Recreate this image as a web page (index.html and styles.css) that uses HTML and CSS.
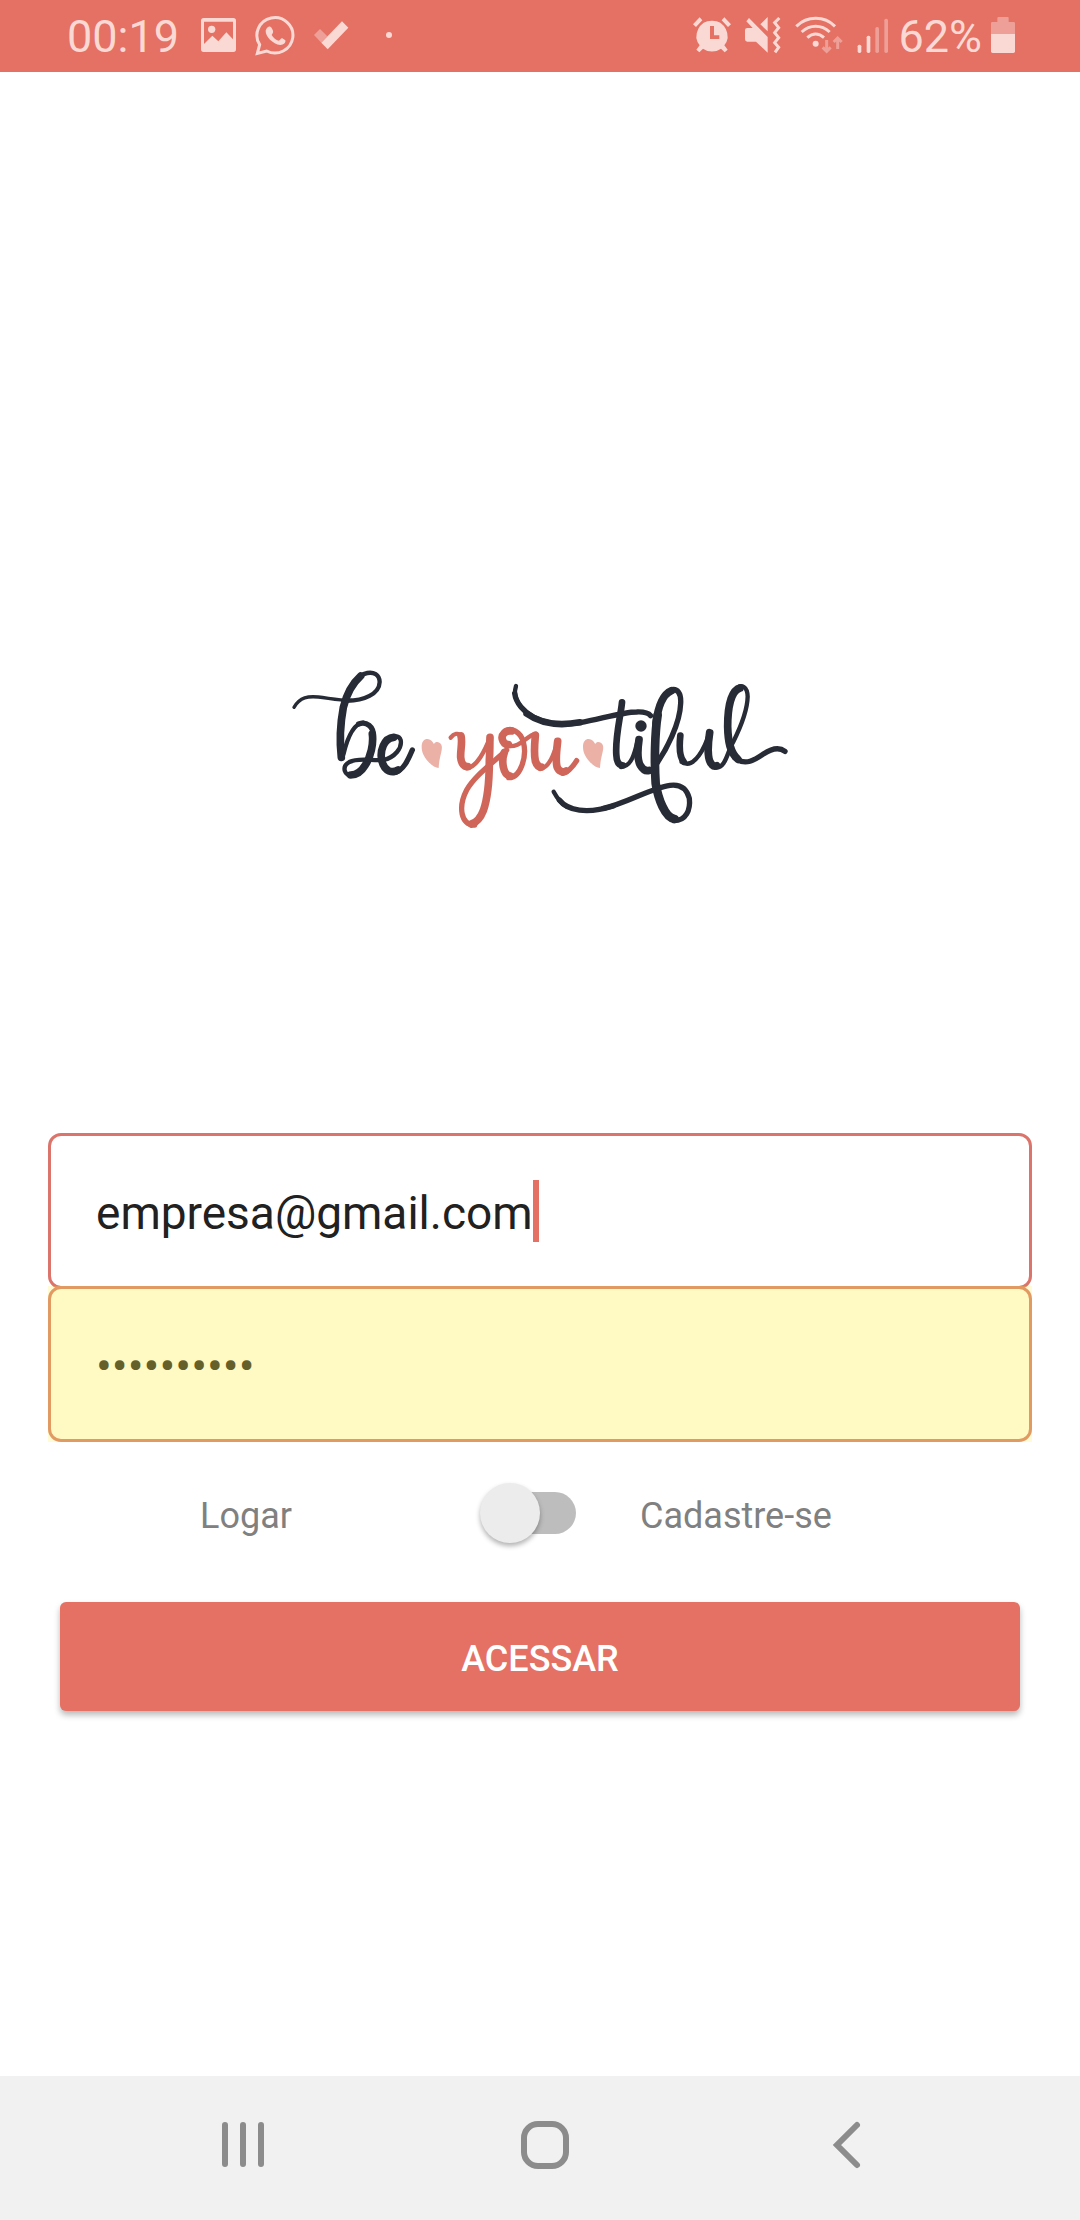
FILE: index.html
```html
<!DOCTYPE html>
<html lang="pt-BR">
<head>
<meta charset="utf-8">
<meta name="viewport" content="width=device-width, initial-scale=1">
<title>Be-you-tiful</title>
<link rel="stylesheet" href="styles.css">
</head>
<body>
<header class="status">
  <div class="status-group">
    <span class="status-text time">00:19</span>
    <svg width="38" height="40" viewBox="480 48 114 120" aria-hidden="true"><path fill-rule="evenodd" d="M491 54H580Q588 54 588 62V148Q588 156 580 156H491Q483 156 483 148V62Q483 54 491 54ZM492 65V132L517 107L535 124L559 97L579 118V65Z"/><circle cx="515" cy="88" r="11"/></svg>
    <svg width="41" height="40" viewBox="645 48 123 120" aria-hidden="true"><path class="wa-ring" d="M652 160L659 134A54 53 0 1 1 680 153Z"/><path d="M685 81C690 77 695 82 699 92C701 98 696 101 695 105C700 114 708 120 716 122C720 122 722 114 727 115L736 121C738 128 731 135 721 135C698 132 676 109 677 92C678 87 681 83 685 81Z"/></svg>
    <svg width="36" height="40" viewBox="822 48 108 120" aria-hidden="true"><path class="dim" d="M825 105L843 87L865 109L847 128Z"/><path d="M847 128L909 64L928 83L866 148Z"/></svg>
    <svg width="27" height="40" viewBox="978 48 81 120" aria-hidden="true"><circle cx="1047" cy="105" r="9"/></svg>
  </div>
  <div class="status-group status-right">
    <svg width="40" height="40" viewBox="63 48 120 120" aria-hidden="true"><path fill-rule="evenodd" d="M123 62A46 46 0 0 1 160 136L170 149L161 157L150 146A46 46 0 0 1 96 146L85 157L76 149L86 136A46 46 0 0 1 123 62ZM117 78V117H145V106H129V78Z"/><path d="M66 73L86 52L94 61L75 81ZM160 52L180 73L171 81L152 61Z"/></svg>
    <svg width="38" height="40" viewBox="219 48 114 120" aria-hidden="true"><path d="M234 54L290 111V158L255 125H229Q222 125 222 118V90Q222 84 229 84H245L226 64ZM290 51V94L268 73Z"/><path class="line" d="M325 54L311 68L323 83L311 98L323 113L311 128L323 142L312 157"/></svg>
    <svg width="50" height="40" viewBox="366 48 150 120" aria-hidden="true"><path class="line" d="M373 79C406 47 457 47 489 79M389 96C414 73 448 73 473 96M406 113C422 99 440 99 456 113"/><circle cx="431" cy="131" r="9"/><path class="line dim-line" d="M464 120V154M452 142L464 154L476 142M497 147V114M485 126L497 114L509 126"/></svg>
    <svg width="34" height="40" viewBox="537 48 102 120" aria-hidden="true"><rect x="542" y="134" width="11" height="25" rx="5"/><rect x="569" y="107" width="11" height="52" rx="5"/><rect class="dim" x="595" y="81" width="11" height="78" rx="5"/><rect class="dim" x="622" y="56" width="11" height="103" rx="5"/></svg>
    <span class="status-text charge">62%</span>
    <svg width="26" height="40" viewBox="954 48 78 120" aria-hidden="true"><path class="dim" d="M957 102V70Q957 66 961 66H976V54Q976 51 979 51H1007Q1010 51 1010 54V66H1025Q1029 66 1029 70V102Z"/><path d="M957 102H1029V154Q1029 159 1024 159H962Q957 159 957 154Z"/></svg>
  </div>
</header>

<main class="login">
  <svg class="logo" viewBox="0 0 1560 540" role="img" aria-label="be you tiful">
    <g class="ink">
      <path class="hair" d="M42 142C60 111 85 108 115 111C150 115 180 122 215 121"/>
      <path class="thin" d="M190 122C255 125 298 100 299 66C298 42 280 36 262 39C230 45 207 82 196 125"/>
      <path class="bold" d="M242 48C214 73 199 105 190 142C181 190 178 240 184 292"/>
      <path class="thin" d="M190 284C205 222 225 190 250 188"/>
      <path class="mid" d="M236 192C260 183 281 200 280 228"/>
      <path class="bold" d="M277 222C281 252 272 290 256 315C244 335 230 345 212 345"/>
      <path class="thin" d="M220 347C192 350 184 320 208 306C235 292 275 303 310 300C345 292 367 264 362 240C358 226 336 224 322 238"/>
      <path class="bold" d="M341 232C312 234 298 274 306 304C314 336 338 340 354 330"/>
      <path class="mid" d="M342 338C370 334 386 296 397 270"/>
    </g>
    <path id="heart" class="heart" d="M425 260C425 240 438 233 450 239C457 243 460 249 462 252C466 244 478 244 484 254C490 270 478 286 476 324C468 324 455 317 445 305C430 288 425 275 425 260Z"/>
    <use href="#heart" x="484"/>
    <g class="coral">
      <path class="thin" d="M512 233C522 220 535 219 543 225"/>
      <path class="bold" d="M543 228C548 244 541 270 542 292C544 312 553 320 563 320"/>
      <path class="thin" d="M560 325C590 322 616 270 630 232"/>
      <path class="bold" d="M630 232C629 260 630 275 628 300C628 350 625 410 610 452C600 478 588 488 574 492"/>
      <path class="mid" d="M584 495C542 496 534 440 560 390C582 350 630 315 680 270"/>
      <path class="bold" d="M673 277C664 302 668 344 690 348"/>
      <path class="mid" d="M686 353C721 354 742 290 730 246C722 214 692 202 678 212"/>
      <path class="bold" d="M694 213C676 211 663 224 667 238C669 248 676 254 685 254"/>
      <path class="thin" d="M678 257C725 265 735 228 768 221"/>
      <path class="bold" d="M766 226C764 250 761 280 766 303C770 316 776 321 784 321"/>
      <path class="thin" d="M780 327C809 323 822 280 833 245"/>
      <path class="bold" d="M833 244C830 270 826 300 831 320C836 334 848 339 858 333"/>
      <path class="mid" d="M848 340C868 336 880 318 890 302"/>
    </g>
    <g class="ink" transform="translate(660 0)">
      <path class="thin" d="M48 78C36 114 62 150 100 173"/>
      <path class="mid" d="M44 100C48 130 72 156 100 171C140 192 190 196 240 188C300 178 365 156 410 156C434 155 446 160 452 167"/>
      <path class="wide" d="M80 161C130 197 190 196 240 187"/>
      <path class="wide" d="M366 127C362 170 345 230 349 285C350 308 358 316 368 316"/>
      <path class="thin" d="M363 321C396 319 405 275 412 245"/>
      <path class="bold" d="M417 239C414 260 409 295 421 316C430 331 440 334 448 331"/>
      <circle class="dot" cx="423" cy="198" r="17"/>
      <path class="mid" d="M465 318C500 270 540 190 542 130C544 98 531 86 516 89"/>
      <path class="bold" d="M514 92C488 103 474 140 468 190"/>
      <path class="heavy" d="M473 165C464 220 463 310 467 370C474 415 495 474 524 477"/>
      <path class="mid" d="M522 482C558 482 572 450 568 415C560 385 540 372 510 376C450 385 380 430 310 445"/>
      <path class="mid" d="M340 438C260 463 203 452 178 420"/>
      <path class="thin" d="M200 440C180 428 170 412 161 395"/>
      <path class="wide" d="M541 227C538 255 538 290 551 305"/>
      <path class="thin" d="M545 306C584 330 616 260 628 218"/>
      <path class="bold" d="M629 218C624 250 620 300 636 314C641 319 646 319 650 317"/>
      <path class="thin" d="M648 323C678 322 680 280 700 245C720 205 742 155 743 110C742 78 724 74 712 83"/>
      <path class="bold" d="M720 84C692 92 683 145 683 200C684 245 690 278 714 298"/>
      <path class="mid" d="M704 293C736 320 767 298 790 282C820 262 842 264 855 274"/>
    </g>
  </svg>

  <form class="form">
    <div class="field">
      <input class="input email" type="text" inputmode="email" aria-label="E-mail" value="empresa@gmail.com"><span class="caret"></span>
    </div>
    <div class="autofill">
      <div class="field filled">
        <input class="input password" type="password" aria-label="Senha" value="senha12345">
      </div>
    </div>
    <div class="mode">
      <label class="mode-label" for="mode">Logar</label>
      <input class="switch" id="mode" type="checkbox" role="switch">
      <label class="mode-label" for="mode">Cadastre-se</label>
    </div>
    <button class="submit" type="button">ACESSAR</button>
  </form>
</main>

<nav class="nav">
  <button class="nav-button" type="button" aria-label="Recentes"><svg width="48" height="54" viewBox="0 0 48 54"><path d="M6 7V46M24 7V46M42 7V46"/></svg></button>
  <button class="nav-button" type="button" aria-label="Início"><svg width="48" height="54" viewBox="0 0 48 54"><rect x="3" y="6" width="42" height="42" rx="14"/></svg></button>
  <button class="nav-button" type="button" aria-label="Voltar"><svg width="48" height="54" viewBox="0 0 48 54"><path d="M34 7L14 27L34 47"/></svg></button>
</nav>
</body>
</html>
```
FILE: styles.css
```css
* {
  box-sizing: border-box;
}

body {
  margin: 0;
  min-height: 100vh;
  display: flex;
  flex-direction: column;
  background: #fff;
  font-family: Roboto, "Noto Sans", sans-serif;
}

button,
input {
  font-family: inherit;
}

/* Status bar */
.status {
  display: flex;
  justify-content: space-between;
  align-items: center;
  height: 72px;
  padding: 0 64px 0 67px;
  background: #e57164;
  color: #fad9d5;
}

.status-group {
  display: flex;
  align-items: center;
  gap: 17px;
}

.status-right {
  gap: 12px;
}

.status-text {
  padding-top: 2px;
  font-size: 45px;
  line-height: 70px;
}

.time {
  margin-right: 4px;
}

.charge {
  margin: 0 -4px;
}

.status svg {
  flex: none;
  fill: #fad9d5;
}

.status .dim {
  fill: #ee9f97;
}

.status .line,
.status .wa-ring {
  fill: none;
  stroke: #fad9d5;
  stroke-width: 9;
}

.status .dim-line {
  stroke: #ee9f97;
}

/* Logo */
.login {
  flex: 1;
  padding: 588px 48px 0;
}

.logo {
  display: block;
  width: 520px;
  max-width: 100%;
  margin: 0 auto 293px;
}

.logo path {
  fill: none;
  stroke-linecap: round;
  stroke-linejoin: round;
}

.ink {
  stroke: #272b35;
}

.coral {
  stroke: #cf6659;
}

.logo .heart {
  fill: #ebb1a7;
}

.dot {
  fill: #272b35;
  stroke: none;
}

/* Pen widths of the lettering */
.hair { stroke-width: 10px; }
.thin { stroke-width: 13px; }
.mid { stroke-width: 16px; }
.wide { stroke-width: 20px; }
.bold { stroke-width: 23px; }
.heavy { stroke-width: 26px; }

/* Form */
.form {
  display: flex;
  flex-direction: column;
}

.field {
  display: flex;
  align-items: center;
  height: 156px;
  padding: 0 45px;
  border: 3px solid #db746b;
  border-radius: 13px;
}

/* Browser autofill tint, laid over the field above by one border */
.autofill {
  margin-top: -3px;
  background: rgba(255, 235, 59, 0.22);
}

.filled {
  border-color: #e19a62;
  background: #fff9c4;
}

.input {
  height: 62px;
  padding: 3px 0 0;
  border: 0;
  outline: 0;
  background: none;
  color: #212121;
  font-size: 46px;
}

.email {
  field-sizing: content;
}

.password {
  flex: 1;
  color: #65602a;
  font-size: 47px;
}

.caret {
  width: 6px;
  height: 62px;
  background: #e57164;
}

.mode {
  display: grid;
  grid-template-columns: 7fr 4fr 11fr;
  align-items: center;
  height: 142px;
  margin: 0 -48px 0 152px;
}

.mode-label {
  padding-top: 6px;
  color: #808080;
  font-size: 36px;
}

/* Toggle: the track is the input, the thumb is its pseudo-element */
.switch {
  appearance: none;
  position: relative;
  width: 96px;
  height: 42px;
  margin: 0;
  border-radius: 21px;
  background: linear-gradient(to right, transparent 12px, #bdbdbd 12px);
}

.switch::before {
  content: "";
  position: absolute;
  left: 0;
  top: -9px;
  width: 60px;
  height: 60px;
  border-radius: 50%;
  background: #ececec;
  box-shadow: 0 3px 5px rgba(0, 0, 0, 0.3);
}

.submit {
  height: 109px;
  margin: 18px 12px 0;
  padding: 4px 0 0;
  border: 0;
  border-radius: 6px;
  background: #e57164;
  box-shadow: 0 4px 6px rgba(0, 0, 0, 0.28);
  color: #fff;
  font-size: 36px;
  font-weight: 500;
}

/* System navigation */
.nav {
  display: flex;
  justify-content: center;
  height: 144px;
  padding: 0 82px 6px 92px;
  background: #f1f1f1;
}

.nav-button {
  flex: 1;
  display: flex;
  align-items: center;
  justify-content: center;
  padding: 0;
  border: 0;
  background: none;
}

.nav-button svg {
  fill: none;
  stroke: #8c8c8c;
  stroke-width: 6;
  stroke-linecap: round;
}
```
